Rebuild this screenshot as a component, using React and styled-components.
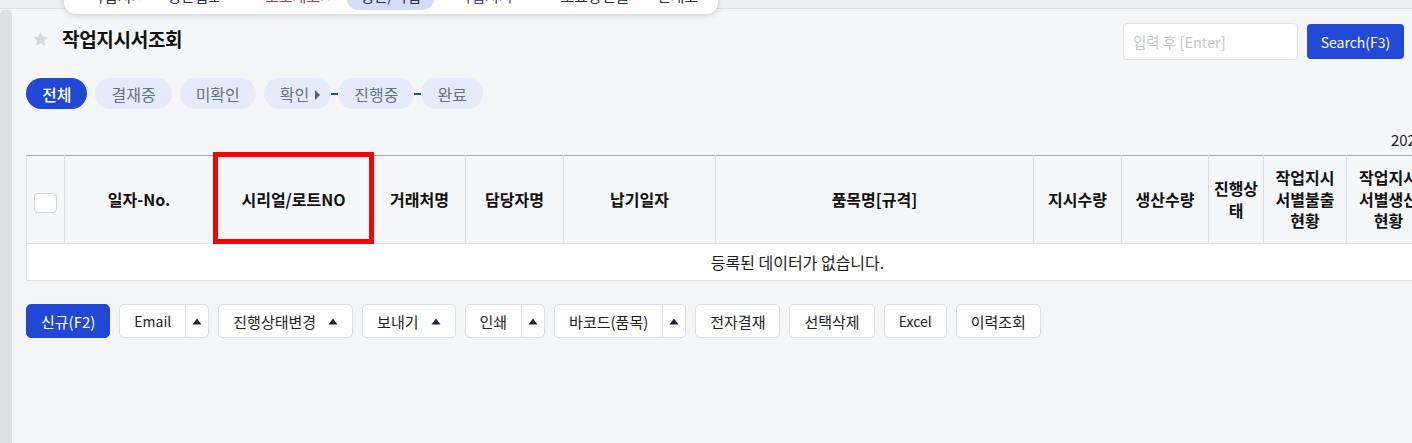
import styled, { createGlobalStyle } from 'styled-components'

const GlobalStyle = createGlobalStyle`
  html, body {
    margin: 0;
    padding: 0;
    background: #f5f6f8;
    overflow: hidden;
    font-family: "Noto Sans CJK KR", "Noto Sans", "Liberation Sans", sans-serif;
    color: #1b1d21;
  }
  * { box-sizing: border-box; }
`

// tabs of the floating menu that is scrolled mostly out of view at the top
const topTabs = [
  { label: '작업지시서', color: '#2b2f4a', width: 50, offset: 26 },
  { label: '생산입고서', color: '#2b2f4a', width: 53, offset: 27 },
  { label: '소모재고서', color: '#b53a4f', width: 65, offset: 45 },
  { label: '생산/작업', color: '#2b2f4a', width: 89, offset: 16, active: true },
  { label: '작업지시', color: '#5b3a9e', width: 60, offset: 20 },
  { label: '소요량산출', color: '#2b2f4a', width: 90, offset: 35 },
  { label: '현재고', color: '#2b2f4a', width: 45, offset: 15 },
]

const filters = [
  { label: '전체', active: true },
  { label: '결재중' },
  { label: '미확인' },
  { label: '확인', caret: true },
  { label: '진행중', link: true },
  { label: '완료', link: true },
]

const columns = [
  { key: 'chk', width: 38 },
  { key: 'no', width: 149, label: '일자-No.' },
  { key: 'serial', width: 160, label: '시리얼/로트NO', marked: true },
  { key: 'cust', width: 92, label: '거래처명' },
  { key: 'emp', width: 98, label: '담당자명' },
  { key: 'due', width: 152, label: '납기일자' },
  { key: 'item', width: 318, label: '품목명[규격]' },
  { key: 'qty', width: 88, label: '지시수량' },
  { key: 'prod', width: 87, label: '생산수량' },
  { key: 'state', width: 55, label: '진행상태', tight: true },
  { key: 'issue', width: 83, label: '작업지시서별불출현황' },
  { key: 'made', width: 84, label: '작업지시서별생산현황' },
  { key: 'etc', width: 138, label: '비고' },
]

const actions = [
  { label: '신규(F2)', primary: true },
  { label: 'Email', split: true, latin: true },
  { label: '진행상태변경', caret: true },
  { label: '보내기', caret: true },
  { label: '인쇄', split: true },
  { label: '바코드(품목)', split: true },
  { label: '전자결재' },
  { label: '선택삭제' },
  { label: 'Excel', latin: true },
  { label: '이력조회' },
]

function Star() {
  return (
    <svg width="17" height="16" viewBox="0 0 24 23">
      <path d="M12 1l3.1 7.1 7.7.7-5.8 5.1 1.7 7.6L12 17.6l-6.7 3.9 1.7-7.6L1.2 8.8l7.7-.7z" fill="#d5d8de" />
    </svg>
  )
}

function Caret() {
  return (
    <svg width="10" height="7" viewBox="0 0 10 7">
      <path d="M5 0.5L9.5 6.5H0.5z" fill="#1f2533" />
    </svg>
  )
}

function App() {
  return (
    <>
      <GlobalStyle />
      <Page>
        <TopStrip />
        <Popup>
          {topTabs.map((t) => (
            <PopupTab
              key={t.label}
              $active={t.active}
              $color={t.color}
              $width={t.width}
              $offset={t.offset}
            >
              {t.label}
            </PopupTab>
          ))}
        </Popup>
        <Body>
          <Rail />
          <Main>
            <TitleRow>
              <TitleGroup>
                <Star />
                <Title>작업지시서조회</Title>
              </TitleGroup>
              <SearchGroup>
                <SearchInput placeholder="입력 후 [Enter]" />
                <SearchButton>Search(F3)</SearchButton>
              </SearchGroup>
            </TitleRow>

            <FilterRow>
              {filters.map((f) => (
                <FilterItem key={f.label} $link={f.link}>
                  {f.link && <Connector />}
                  <Pill $active={f.active} $caret={f.caret}>
                    {f.label}
                    {f.caret && <PillCaret />}
                  </Pill>
                </FilterItem>
              ))}
            </FilterRow>

            <GridArea>
              <DateLine>2025-01-01 ~ 2025-12-31</DateLine>
              <Table>
                <colgroup>
                  {columns.map((c) => <col key={c.key} style={{ width: c.width }} />)}
                </colgroup>
                <thead>
                  <tr>
                    {columns.map((c) => (
                      <Th key={c.key} $tight={c.tight}>
                        {c.key === 'chk' ? <CheckBox /> : c.label}
                        {c.marked && <Mark />}
                      </Th>
                    ))}
                  </tr>
                </thead>
                <tbody>
                  <tr>
                    <EmptyCell colSpan={columns.length}>등록된 데이터가 없습니다.</EmptyCell>
                  </tr>
                </tbody>
              </Table>
            </GridArea>

            <ActionRow>
              {actions.map((a) => (
                <ActionButton key={a.label} $primary={a.primary} $latin={a.latin}>
                  <ActionLabel>
                    {a.label}
                    {a.caret && <Caret />}
                  </ActionLabel>
                  {a.split && <SplitArrow><Caret /></SplitArrow>}
                </ActionButton>
              ))}
            </ActionRow>
          </Main>
        </Body>
      </Page>
    </>
  )
}

export default App

const Page = styled.div`
  position: relative;
  width: 100%;
  height: 443px;
  overflow: hidden;
`

const TopStrip = styled.div`
  height: 9px;
  background: #eeeff2;
  border-bottom: 1px solid #dcdee3;
`

const Popup = styled.div`
  position: absolute;
  left: 64px;
  top: -30px;
  width: 654px;
  height: 44px;
  background: #ffffff;
  border-radius: 12px;
  box-shadow: 0 2px 6px rgba(0, 0, 0, 0.14);
  display: flex;
  align-items: flex-end;
  padding: 0 0 4px 0;
  z-index: 5;
`

const PopupTab = styled.div`
  flex-shrink: 0;
  width: ${(p) => p.$width}px;
  margin-left: ${(p) => p.$offset}px;
  height: 26px;
  border-radius: 13px;
  font-size: 15px;
  line-height: 24px;
  text-align: center;
  overflow: hidden;
  color: ${(p) => p.$color};
  background: ${(p) => (p.$active ? '#d4ddf8' : 'transparent')};
  white-space: nowrap;
`

const Body = styled.div`
  display: flex;
  flex-direction: row;
  height: 434px;
`

const Rail = styled.div`
  width: 12px;
  flex-shrink: 0;
  margin-top: 1px;
  background: #dcdfe3;
  border-radius: 5px 5px 0 0;
`

const Main = styled.div`
  flex: 1;
  min-width: 0;
  padding: 14px 8px 0 14px;
  display: flex;
  flex-direction: column;
`

const TitleRow = styled.div`
  display: flex;
  flex-direction: row;
  align-items: center;
  justify-content: space-between;
  height: 37px;
`

const TitleGroup = styled.div`
  display: flex;
  align-items: center;
  gap: 13px;
  padding-left: 6px;
  margin-top: -6px;
`

const Title = styled.div`
  font-size: 19px;
  font-weight: 700;
  color: #111111;
  letter-spacing: -0.3px;
`

const SearchGroup = styled.div`
  display: flex;
  align-items: center;
  gap: 9px;
`

const SearchInput = styled.input`
  width: 175px;
  height: 37px;
  border: 1px solid #dde1e6;
  border-radius: 4px;
  background: #ffffff;
  padding: 0 9px;
  font-family: inherit;
  font-size: 14.5px;
  outline: none;

  &::placeholder {
    color: #c3c7cd;
  }
`

const SearchButton = styled.button`
  width: 97px;
  height: 35px;
  border: none;
  border-radius: 4px;
  background: #2349d8;
  color: #ffffff;
  font-family: inherit;
  font-size: 14px;
  padding: 0;
`

const FilterRow = styled.div`
  display: flex;
  flex-direction: row;
  align-items: center;
  gap: 8px;
  margin-top: 18px;
`

const FilterItem = styled.div`
  display: flex;
  align-items: center;
  margin-left: ${(p) => (p.$link ? '-8px' : '0')};
`

const Connector = styled.span`
  display: block;
  width: 7px;
  height: 2px;
  background: #2349d8;
`

const Pill = styled.div`
  height: 31px;
  padding: 0 ${(p) => (p.$caret ? '11px' : '16px')} 0 16px;
  border-radius: 16px;
  display: flex;
  align-items: center;
  gap: 6px;
  font-size: 16px;
  color: ${(p) => (p.$active ? '#ffffff' : '#667085')};
  background: ${(p) => (p.$active ? '#2148d3' : '#e5ebfb')};
  font-weight: ${(p) => (p.$active ? 500 : 400)};
  white-space: nowrap;
`

const PillCaret = styled.span`
  width: 0;
  height: 0;
  border-top: 5px solid transparent;
  border-bottom: 5px solid transparent;
  border-left: 5px solid #5b6170;
  margin-top: 2px;
`

const GridArea = styled.div`
  width: 1542px;
  margin-top: 21px;
  display: flex;
  flex-direction: column;
`

const DateLine = styled.div`
  text-align: right;
  font-size: 15px;
  color: #1b1d21;
  height: 25px;
  line-height: 20px;
  padding-right: 8px;
`

const Table = styled.table`
  width: 1542px;
  table-layout: fixed;
  border-collapse: collapse;
  border-top: 1px solid #9cabb9;
`

const Th = styled.th`
  position: relative;
  height: 88px;
  padding: 0 ${(p) => (p.$tight ? '1px' : '5px')};
  background: #f6f7f9;
  border-left: 1px solid #dcdfe4;
  border-right: 1px solid #dcdfe4;
  border-bottom: 1px solid #dcdfe4;
  font-size: 16px;
  font-weight: 700;
  line-height: 21.5px;
  color: #111111;
  text-align: center;
  word-break: break-all;
`

const Mark = styled.span`
  position: absolute;
  left: -1px;
  right: -1px;
  top: -4px;
  bottom: -1px;
  border: 5px solid #ff0000;
  pointer-events: none;
`

const CheckBox = styled.span`
  display: block;
  width: 23px;
  height: 20px;
  margin: 6px auto 0;
  border: 1px solid #cfd3d9;
  border-radius: 4px;
  background: #ffffff;
`

const EmptyCell = styled.td`
  height: 37px;
  background: #ffffff;
  border: 1px solid #dcdfe4;
  text-align: center;
  font-size: 16px;
  color: #1b1d21;
`

const ActionRow = styled.div`
  display: flex;
  flex-direction: row;
  gap: 9px;
  margin-top: 23px;
`

const ActionButton = styled.div`
  height: 34px;
  display: flex;
  flex-direction: row;
  align-items: stretch;
  border-radius: 5px;
  border: 1px solid ${(p) => (p.$primary ? '#2148d3' : '#dcdfe4')};
  background: ${(p) => (p.$primary ? '#2148d3' : '#ffffff')};
  color: ${(p) => (p.$primary ? '#ffffff' : '#222222')};
  font-size: ${(p) => (p.$latin ? '14px' : '15px')};
  white-space: nowrap;
`

const ActionLabel = styled.span`
  display: flex;
  align-items: center;
  gap: 12px;
  padding: 0 14px;
`

const SplitArrow = styled.span`
  width: 23px;
  display: flex;
  align-items: center;
  justify-content: center;
  border-left: 1px solid #dcdfe4;
`
